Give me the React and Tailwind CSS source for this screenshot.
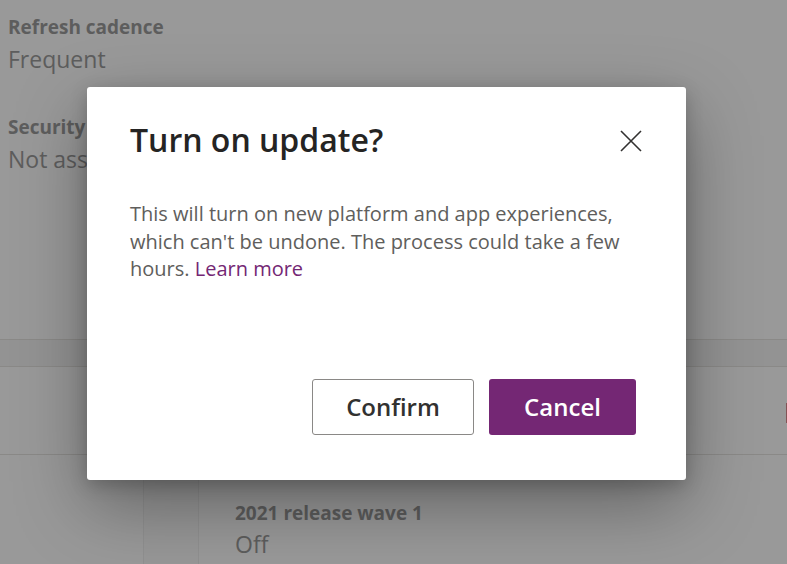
export default function App() {
  const font = { fontFamily: '"Open Sans", "Noto Sans", sans-serif' };
  return (
    <div className="relative h-[564px] w-[787px] overflow-hidden bg-white text-[#9c9c9c]" style={font}>
      {/* page behind the dialog */}
      <div className="flex flex-col pl-2 pt-[14px]">
        <div className="text-[19px] font-bold leading-[26px]">Refresh cadence</div>
        <div className="mt-[4px] text-[23px] leading-[30px]">Frequent</div>
        <div className="mt-[40px] text-[19px] font-bold leading-[26px]">Security group</div>
        <div className="mt-[4px] text-[23px] leading-[30px]">Not assigned</div>
      </div>
      <div className="mt-[165px] h-[28px] border-y border-[#e6e4e2] bg-[#f6f6f6]" />
      <div className="flex h-[88px] justify-end border-b border-[#e6e4e2]">
        <div className="mt-[36px] h-[20px] w-[1px] bg-[#d98a8e]" />
      </div>
      <div className="flex h-[120px]">
        <div className="w-[143px]" />
        <div className="w-[56px] border-x border-[#f0f0f0] bg-[#fcfcfc]" />
        <div className="pl-[36px] pt-[45px]">
          <div className="text-[19px] font-bold leading-[26px]">2021 release wave 1</div>
          <div className="mt-[3px] text-[23px] leading-[30px]">Off</div>
        </div>
      </div>

      {/* overlay */}
      <div className="absolute inset-0 bg-black/40" />

      {/* dialog */}
      <div className="absolute left-[87px] top-[87px] flex h-[393px] w-[599px] flex-col rounded-[3px] bg-white shadow-[0_25px_70px_rgba(0,0,0,0.35),0_5px_18px_rgba(0,0,0,0.2)]">
        <div className="flex items-start justify-between pl-[43px] pr-[43px] pt-[30px]">
          <h1 className="text-[32px] font-semibold leading-[46px] text-[#252423]">Turn on update?</h1>
          <button className="mt-[12px] h-[24px] w-[24px] text-[#323130]" aria-label="Close">
            <svg viewBox="0 0 24 24" width="24" height="24" fill="none" stroke="currentColor" strokeWidth="1.6">
              <path d="M2 2 L22 22 M22 2 L2 22" />
            </svg>
          </button>
        </div>
        <p className="mt-[37px] w-[540px] pl-[43px] text-[20px] leading-[27.5px] text-[#605e5c]">
          This will turn on new platform and app experiences, which can't be undone. The process could take a few hours.{' '}
          <a className="text-[#742774]">Learn more</a>
        </p>
        <div className="mt-auto mb-[45px] flex justify-end gap-[15px] pr-[50px]">
          <button className="h-[56px] w-[162px] rounded-[3px] border border-[#8a8886] bg-white text-[24px] font-semibold text-[#323130]">
            Confirm
          </button>
          <button className="h-[56px] w-[147px] rounded-[3px] bg-[#742774] text-[24px] font-semibold text-white">
            Cancel
          </button>
        </div>
      </div>
    </div>
  );
}
